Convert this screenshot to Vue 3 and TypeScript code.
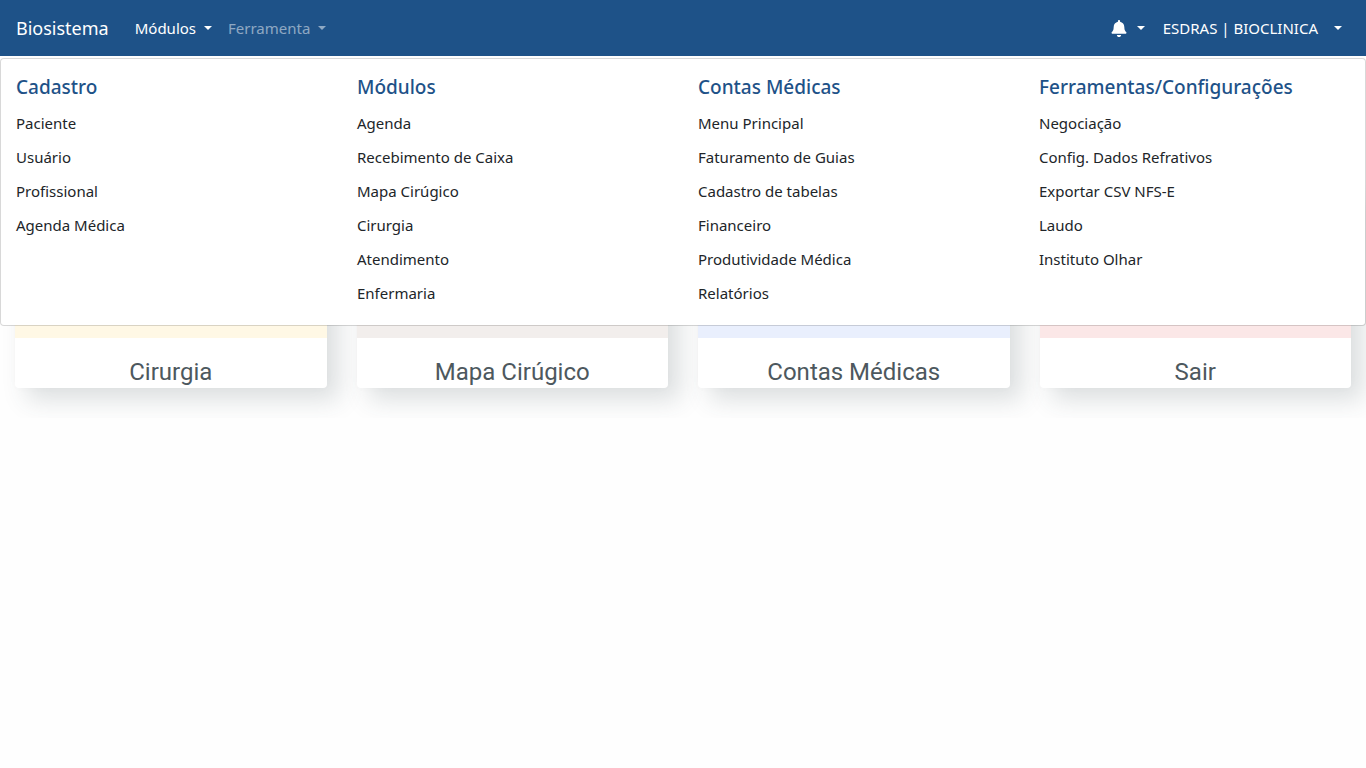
<script setup lang="ts">
interface MenuGroup {
  title: string
  items: string[]
}

interface Card {
  title: string
  tone: string
}

const groups: MenuGroup[] = [
  { title: 'Cadastro', items: ['Paciente', 'Usuário', 'Profissional', 'Agenda Médica'] },
  {
    title: 'Módulos',
    items: ['Agenda', 'Recebimento de Caixa', 'Mapa Cirúgico', 'Cirurgia', 'Atendimento', 'Enfermaria'],
  },
  {
    title: 'Contas Médicas',
    items: [
      'Menu Principal',
      'Faturamento de Guias',
      'Cadastro de tabelas',
      'Financeiro',
      'Produtividade Médica',
      'Relatórios',
    ],
  },
  {
    title: 'Ferramentas/Configurações',
    items: ['Negociação', 'Config. Dados Refrativos', 'Exportar CSV NFS-E', 'Laudo', 'Instituto Olhar'],
  },
]

const cards: Card[] = [
  { title: 'Cirurgia', tone: 'amber' },
  { title: 'Mapa Cirúgico', tone: 'brown' },
  { title: 'Contas Médicas', tone: 'blue' },
  { title: 'Sair', tone: 'red' },
]
</script>

<template>
  <div class="page">
    <header class="navbar">
      <a class="brand" href="#">Biosistema</a>
      <nav class="links">
        <button class="nav-item caret active" type="button" aria-expanded="true">Módulos</button>
        <button class="nav-item caret" type="button">Ferramenta</button>
      </nav>
      <div class="account">
        <button class="nav-item caret active" type="button" aria-label="Notificações">
          <svg class="bell" viewBox="0 0 448 512" aria-hidden="true">
            <path
              fill="currentColor"
              d="M224 512c35.32 0 63.97-28.65 63.97-64H160.03c0 35.35 28.65 64 63.97 64zm215.39-149.71c-19.32-20.76-55.47-51.99-55.47-154.29 0-77.7-54.48-139.9-127.94-155.16V32c0-17.67-14.32-32-31.98-32s-31.98 14.33-31.98 32v20.84C118.56 68.1 64.08 130.3 64.08 208c0 102.3-36.15 133.53-55.47 154.29-6 6.45-8.66 14.16-8.61 21.71.11 16.4 12.98 32 32.1 32h383.8c19.12 0 32-15.6 32.1-32 .05-7.55-2.61-15.27-8.61-21.71z"
            />
          </svg>
        </button>
        <button class="nav-item caret user active" type="button">ESDRAS | BIOCLINICA</button>
      </div>
      <div class="mega">
        <section v-for="group in groups" :key="group.title" class="group">
          <h2>{{ group.title }}</h2>
          <ul>
            <li v-for="item in group.items" :key="item">
              <a href="#">{{ item }}</a>
            </li>
          </ul>
        </section>
      </div>
    </header>
    <main class="cards">
      <a v-for="card in cards" :key="card.title" class="card" href="#">
        <span class="band" :class="card.tone"></span>
        <span class="title">{{ card.title }}</span>
      </a>
    </main>
  </div>
</template>

<style>
body {
  margin: 0;
  background: #fefefe;
}
</style>

<style scoped>
.page {
  font-family: 'Segoe UI', 'Noto Sans', sans-serif;
  font-size: 15px;
  line-height: 24px;
  color: #212529;
}

.page,
.page * {
  box-sizing: border-box;
}

a {
  color: inherit;
  text-decoration: none;
}

.navbar {
  position: relative;
  z-index: 1;
  display: flex;
  align-items: center;
  height: 56px;
  padding: 0 16px;
  background: #1e5288;
}

.brand {
  margin-right: 18px;
  font-size: 18px;
  line-height: 30px;
  color: #fff;
}

.links,
.account {
  display: flex;
}

.account {
  gap: 2px;
  margin-left: auto;
}

.nav-item {
  display: flex;
  align-items: center;
  padding: 8px;
  border: 0;
  background: none;
  font: inherit;
  color: rgba(255, 255, 255, 0.5);
  cursor: pointer;
}

.nav-item.active {
  color: #fff;
}

.caret::after {
  content: '';
  margin-left: 8px;
  border-top: 4px solid;
  border-right: 4px solid transparent;
  border-left: 4px solid transparent;
}

.account .caret::after {
  margin-left: 10px;
}

.account .user::after {
  margin-left: 16px;
}

.bell {
  width: 16px;
  height: 17px;
}

.mega {
  position: absolute;
  top: 58px;
  left: 0;
  right: 0;
  display: grid;
  grid-template-columns: repeat(4, 1fr);
  padding: 16px 0 15px;
  border: 1px solid rgba(0, 0, 0, 0.15);
  border-radius: 4px;
  background: #fff;
  background-clip: padding-box;
}

.group {
  padding: 0 15px;
}

h2 {
  margin: 0 0 7px;
  font-size: 19px;
  font-weight: 500;
  line-height: 24px;
  color: #1e5288;
}

ul {
  margin: 0;
  padding: 0;
  list-style: none;
}

li {
  padding: 5px 0;
}

.cards {
  display: grid;
  grid-template-columns: repeat(4, 1fr);
  gap: 30px;
  padding: 132px 15px 30px;
}

.card {
  display: flex;
  flex-direction: column;
  overflow: hidden;
  border-radius: 4px;
  background: #fff;
  box-shadow:
    12px 12px 24px rgba(55, 70, 80, 0.17),
    0 0 10px rgba(0, 0, 0, 0.02);
}

.band {
  height: 150px;
}

.amber {
  background: #fff8e5;
}

.brown {
  background: #f2eeec;
}

.blue {
  background: #e9effd;
}

.red {
  background: #fbe7e7;
}

.title {
  padding-top: 18px;
  font-family: Roboto, sans-serif;
  font-size: 24px;
  line-height: 32px;
  text-align: center;
  color: #4d585e;
}
</style>
